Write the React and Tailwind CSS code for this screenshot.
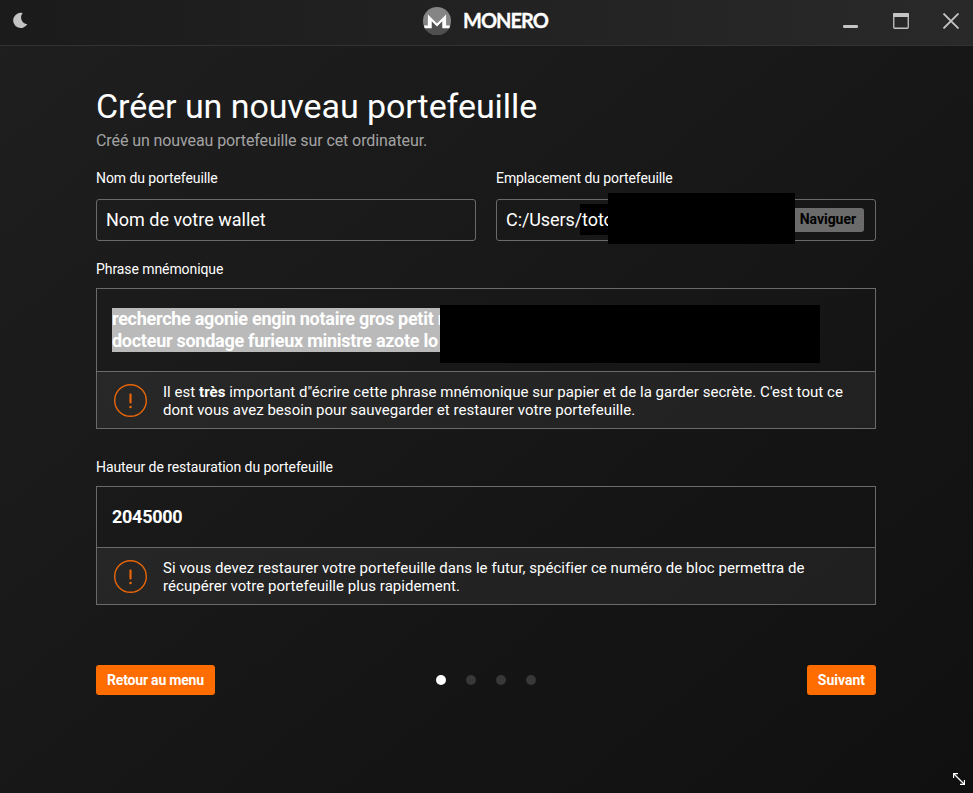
import React from "react";

function Moon() {
  return (
    <svg width="16" height="17" viewBox="0 0 16 17" className="block">
      <path d="M9.7 1 A7.6 7.6 0 1 0 14.3 12.3 A6.9 6.9 0 0 1 9.7 1Z" fill="#c4c4c4" />
    </svg>
  );
}

function MoneroMark() {
  return (
    <svg width="28" height="28" viewBox="0 0 28 28" className="block">
      <circle cx="14" cy="14" r="14" fill="#858585" />
      <path d="M1.4 20.2 H8.4 V13 L14 18.6 L19.6 13 V20.2 H26.6 A14 14 0 0 1 1.4 20.2Z" fill="#4f4f4f" />
      <path d="M1 18.4 H4.9 V7.6 L14 16.6 L23.1 7.6 V18.4 H27 L26.4 21.2 H19.3 V14.2 L14 19.5 L8.7 14.2 V21.2 H1.6Z" fill="#fff" />
    </svg>
  );
}

function TitleBar() {
  return (
    <header className="relative flex h-[46px] items-start justify-between border-b border-[#323232] bg-linear-to-r from-[#1b1b1b] to-[#292929]">
      <div className="pt-[12px] pl-[13px]">
        <Moon />
      </div>
      <div className="absolute top-[7px] left-[423px] flex items-center">
        <MoneroMark />
        <span className="relative top-[-1px] ml-[12px] font-['Lato'] text-[20px] leading-[28px] font-bold tracking-[-1px] text-white [-webkit-text-stroke:0.3px_#fff]">
          MONERO
        </span>
      </div>
      <div className="flex pt-[13px] pr-[14px]">
        <svg width="116" height="16" viewBox="0 0 116 16" className="block">
          <rect x="0" y="12" width="15" height="3" rx="1.2" fill="#c4c4c4" />
          <rect x="50.75" y="0.75" width="14.5" height="14.5" rx="1" fill="none" stroke="#c4c4c4" strokeWidth="1.3" />
          <rect x="50" y="0" width="16" height="4" rx="1" fill="#c4c4c4" />
          <path d="M100.5 0.5 L115.5 15.5 M115.5 0.5 L100.5 15.5" stroke="#c4c4c4" strokeWidth="1.8" />
        </svg>
      </div>
    </header>
  );
}

function Label({ children }) {
  return <div className="h-[18px] text-[14px] leading-[18px] tracking-[-0.08px] whitespace-nowrap">{children}</div>;
}

function Notice({ children }) {
  return (
    <div className="flex h-[57px] items-center border-t border-[#6a6a6a] bg-white/6 pl-[17px]">
      <svg width="33" height="33" viewBox="0 0 33 33" className="block shrink-0">
        <circle cx="16.5" cy="16.5" r="15.8" fill="none" stroke="#e86607" strokeWidth="1.4" />
        <rect x="15.4" y="9.5" width="2.2" height="10" rx="1" fill="#e86607" />
        <circle cx="16.5" cy="23" r="1.3" fill="#e86607" />
      </svg>
      <p className="ml-[16px] pt-[2px] text-[15px] leading-[18px] tracking-[0.045px] whitespace-nowrap">{children}</p>
    </div>
  );
}

function Button({ children, className = "" }) {
  return (
    <button
      className={`h-[30px] rounded-[3px] bg-[#ff6c00] px-[11px] text-[14px] leading-[30px] font-bold whitespace-nowrap text-white ${className}`}
    >
      {children}
    </button>
  );
}

export default function App() {
  return (
    <div className="relative h-[793px] w-[973px] overflow-hidden bg-linear-to-br from-[#1f1f1f] to-[#101010] font-['Roboto','Noto_Sans',sans-serif] text-white">
      <TitleBar />
      <main className="pr-[97px] pl-[96px]">
        <h1 className="pt-[38px] text-[34px] leading-[44px] font-normal tracking-[-0.07px] whitespace-nowrap">
          Créer un nouveau portefeuille
        </h1>
        <p className="mt-[3px] text-[16px] leading-[20px] tracking-[-0.095px] whitespace-nowrap text-[#a3a3a3]">
          Créé un nouveau portefeuille sur cet ordinateur.
        </p>

        <div className="mt-[18px] grid grid-cols-2 gap-[20px]">
          <div>
            <Label>Nom du portefeuille</Label>
            <div className="mt-[12px] flex h-[42px] items-center rounded-[3px] border border-[#6a6a6a] px-[9px] pb-[2px] text-[18px]">
              Nom de votre wallet
            </div>
          </div>
          <div>
            <Label>Emplacement du portefeuille</Label>
            <div className="relative mt-[12px] flex h-[42px] items-center justify-between rounded-[3px] border border-[#6a6a6a] pr-[11px] pl-[9px] text-[18px]">
              <span className="absolute top-[4px] left-[83px] h-[31px] w-[30px] bg-black" />
              <span className="relative pb-[2px] tracking-[-0.08px]">C:/Users/toto</span>
              <span className="h-[24px] rounded-[3px] bg-[#6b6b6b] px-[8px] text-[14px] leading-[23px] font-bold tracking-[-0.05px] text-black">
                Naviguer
              </span>
              <span className="absolute top-[-7px] left-[111px] h-[51px] w-[187px] bg-black" />
            </div>
          </div>
        </div>

        <div className="mt-[19px]">
          <Label>Phrase mnémonique</Label>
        </div>
        <section className="relative mt-[10px] h-[141px] border border-[#6a6a6a]">
          <div className="h-[82px] pt-[19px] pl-[15px]">
            <div className="w-[340px] bg-[#bababa] text-[18px] leading-[22px] font-bold tracking-[-0.27px] whitespace-nowrap">
              <div>recherche agonie engin notaire gros petit n</div>
              <div>docteur sondage furieux ministre azote lo</div>
            </div>
          </div>
          <span className="absolute top-[16px] left-[343px] h-[58px] w-[380px] bg-black" />
          <Notice>
            Il est <b>très</b> important d"écrire cette phrase mnémonique sur papier et de la garder secrète. C'est tout ce
            <br />
            dont vous avez besoin pour sauvegarder et restaurer votre portefeuille.
          </Notice>
        </section>

        <div className="mt-[29px]">
          <Label>Hauteur de restauration du portefeuille</Label>
        </div>
        <section className="mt-[10px] h-[119px] border border-[#6a6a6a]">
          <div className="flex h-[60px] items-center pb-[2px] pl-[15px] text-[18px] font-bold tracking-[-0.27px]">
            2045000
          </div>
          <Notice>
            Si vous devez restaurer votre portefeuille dans le futur, spécifier ce numéro de bloc permettra de
            <br />
            récupérer votre portefeuille plus rapidement.
          </Notice>
        </section>

        <nav className="mt-[60px] grid grid-cols-3 items-center">
          <div>
            <Button className="w-[119px] tracking-[-0.2px]">Retour au menu</Button>
          </div>
          <div className="flex justify-center gap-[20px]">
            <span className="size-[10px] rounded-full bg-white" />
            <span className="size-[10px] rounded-full bg-[#383838]" />
            <span className="size-[10px] rounded-full bg-[#383838]" />
            <span className="size-[10px] rounded-full bg-[#383838]" />
          </div>
          <div className="text-right">
            <Button>Suivant</Button>
          </div>
        </nav>
      </main>
      <svg width="12" height="12" viewBox="0 0 12 12" className="absolute right-[8px] bottom-[8px]">
        <path d="M1 1 L11 11" stroke="#fff" strokeWidth="1.3" />
        <path d="M0.5 5 V0.5 H5 M11.5 7 V11.5 H7" fill="none" stroke="#fff" strokeWidth="1.3" />
      </svg>
    </div>
  );
}
